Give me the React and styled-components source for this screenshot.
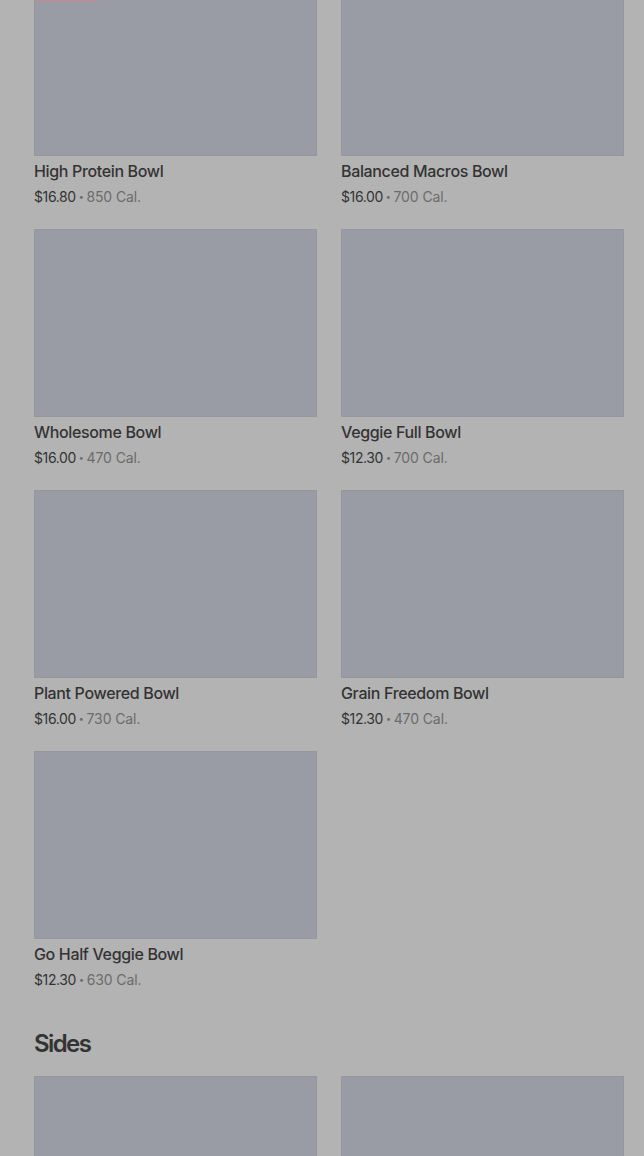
import React from "react";
import styled, { createGlobalStyle } from "styled-components";

const Global = createGlobalStyle`
  html, body { margin: 0; padding: 0; background: #b3b3b3; overflow: hidden; }
  body { font-family: Inter, "Noto Sans", sans-serif; -webkit-font-smoothing: antialiased; }
`;

const Page = styled.main`
  padding: 0 20px 0 34px;
  margin-top: -32px;
`;

const Grid = styled.div`
  display: grid;
  grid-template-columns: 283px 283px;
  column-gap: 24px;
  row-gap: 23px;
`;

const Card = styled.article`
  display: flex;
  flex-direction: column;
`;

const Thumb = styled.div`
  position: relative;
  height: 188px;
  background: #999ca4;
  box-shadow: inset 0 0 0 1px rgba(0, 0, 0, 0.03);
`;

const Badge = styled.span`
  position: absolute;
  left: 0;
  top: 12px;
  width: 63px;
  height: 21px;
  background: #c9878e;
`;

const Title = styled.h3`
  margin: 5px 0 0;
  font-size: 16px;
  line-height: 20px;
  font-weight: 500;
  color: #333333;
  letter-spacing: -0.35px;
`;

const Meta = styled.p`
  display: flex;
  align-items: center;
  margin: 6px 0 0;
  font-size: 14px;
  line-height: 19px;
  color: #333333;
  letter-spacing: -0.4px;
`;

const Dot = styled.span`
  margin: 0 3px;
  font-size: 9px;
  color: #6b6b6b;
`;

const Muted = styled.span`
  color: #6b6b6b;
  letter-spacing: -0.1px;
`;

const SectionTitle = styled.h2`
  margin: 39px 0 16px;
  font-size: 24px;
  line-height: 32px;
  font-weight: 600;
  letter-spacing: -1.6px;
  color: #333333;
`;

const bowls = [
  ["High Protein Bowl", "$16.80", "850 Cal.", true],
  ["Balanced Macros Bowl", "$16.00", "700 Cal."],
  ["Wholesome Bowl", "$16.00", "470 Cal."],
  ["Veggie Full Bowl", "$12.30", "700 Cal."],
  ["Plant Powered Bowl", "$16.00", "730 Cal."],
  ["Grain Freedom Bowl", "$12.30", "470 Cal."],
  ["Go Half Veggie Bowl", "$12.30", "630 Cal."],
];

function Item({ name, price, cal, badge }) {
  return (
    <Card>
      <Thumb>{badge && <Badge />}</Thumb>
      {name && <Title>{name}</Title>}
      {price && (
        <Meta>
          <span>{price}</span>
          <Dot>•</Dot>
          <Muted>{cal}</Muted>
        </Meta>
      )}
    </Card>
  );
}

export default function App() {
  return (
    <>
      <Global />
      <Page>
        <Grid>
          {bowls.map(([n, p, c, b]) => (
            <Item key={n} name={n} price={p} cal={c} badge={b} />
          ))}
        </Grid>
        <SectionTitle>Sides</SectionTitle>
        <Grid>
          <Item />
          <Item />
        </Grid>
      </Page>
    </>
  );
}
